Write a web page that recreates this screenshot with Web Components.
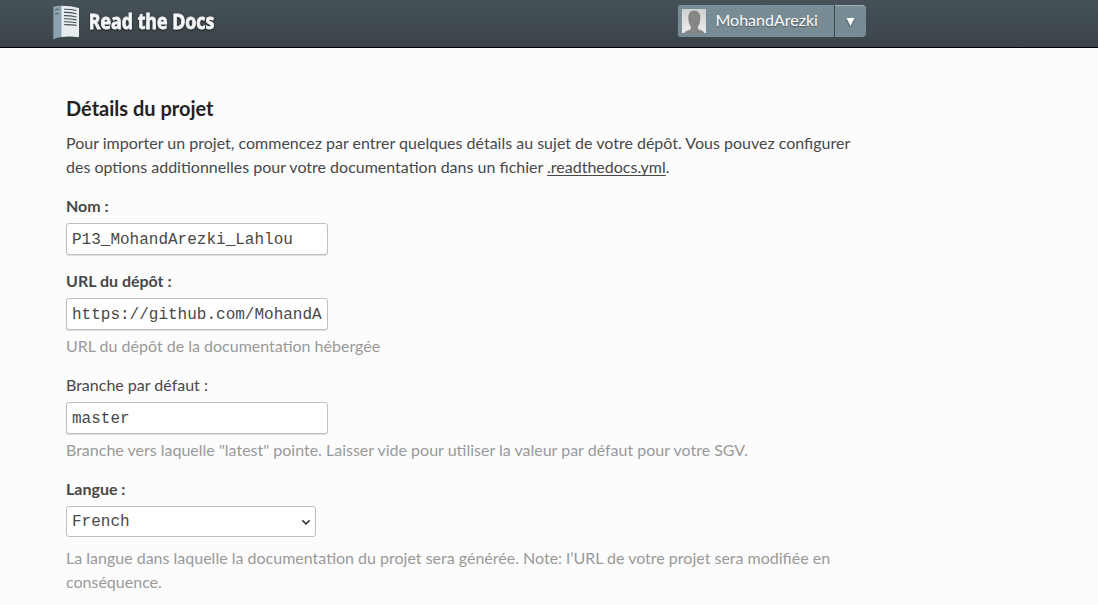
<!DOCTYPE html>
<html lang="fr">
<head>
<meta charset="utf-8">
<title>Read the Docs</title>
<style>
body{margin:0;background:#fcfcfc;font:16px/24px Lato,"Open Sans",sans-serif;color:#484848;height:605px;overflow:hidden}
</style>
</head>
<body>
<rtd-page></rtd-page>
<script>
class RtdLogo extends HTMLElement{
  constructor(){super();this.attachShadow({mode:'open'}).innerHTML=`
  <style>:host{display:flex;width:190px;height:47px}svg{display:block}text{font:700 20.5px "Open Sans","Noto Sans",sans-serif;fill:#f4f6f7;stroke:#f4f6f7;stroke-width:.8px;filter:drop-shadow(0 1px 1px #1c2428)}</style>
  <svg width="190" height="47" viewBox="0 0 190 47">
    <path d="M.3 6.8Q4 5.4 9 5.8V37Q4 37.2 .3 39.6Z" fill="#8ca1af"/>
    <path d="M8.5 5.8Q18 5.8 26 8V37.2Q17 35.8 8.5 37Z" fill="#e8ecee"/>
    <path d="M2 9.6Q4 9 6 9.3M2 14Q4 13.4 6 13.8" fill="none" stroke="#4c5f69" stroke-width="1"/>
    <path d="M11 9.3Q17 9 23.5 10.5M11 12.4Q17 12.3 23.5 13.7M11 15.6Q17 15.5 23.5 17M11 18.8Q17 18.7 23.5 19.9M11 21.8Q17 21.6 23.5 22.7M11 24.7Q17 24.5 23.5 25.4" fill="none" stroke="#46525a" stroke-width="1.1"/>
    <text x="35.8" y="28.5" textLength="125.5" lengthAdjust="spacingAndGlyphs">Read the Docs</text>
  </svg>`}
}
customElements.define('rtd-logo',RtdLogo);

class RtdUser extends HTMLElement{
  constructor(){super();this.attachShadow({mode:'open'}).innerHTML=`
  <style>
  :host{display:flex;height:32px;color:#fff;text-shadow:0 1px 1px #465158}
  .name{display:flex;box-sizing:border-box;width:156px;background:#788c96;padding:4px 0 4px 4px;gap:9.5px;border-radius:2px 0 0 2px;line-height:22px}
  .menu{display:flex;box-sizing:border-box;width:32px;background:#788c96;border-left:1px solid #3c464b;border-top:1px solid #a3b1b8;border-radius:0 4px 4px 0;align-items:center;justify-content:center}
  svg{display:block;flex:none}
  .menu svg{filter:drop-shadow(0 1px 1px #465158)}
  </style>
  <div class="name"><svg width="24" height="24" viewBox="0 0 24 24"><defs><linearGradient id="g" x2="0" y2="1"><stop stop-color="#d0d0d0"/><stop offset="1" stop-color="#ececec"/></linearGradient></defs><rect width="24" height="24" fill="url(#g)"/><path d="M2 24Q3 21.8 7 21Q9.3 20.3 9 18.5Q6.3 14.5 6.3 9Q6.3 1.5 12.3 1.5T18.3 9Q18.3 14.5 15.8 18.5Q15.5 20.3 18 21Q21.8 21.8 22.5 24Z" fill="#868686"/></svg><slot></slot></div>
  <div class="menu"><svg width="9" height="8"><path d="M.5 0H8.5L4.5 8Z" fill="#fff"/></svg></div>`}
}
customElements.define('rtd-user',RtdUser);

class RtdHeader extends HTMLElement{
  constructor(){super();this.attachShadow({mode:'open'}).innerHTML=`
  <style>:host{display:flex;box-sizing:border-box;height:48px;padding:0 232px 0 53px;justify-content:space-between;background:linear-gradient(#465158,#3a4449);border-bottom:1px solid #000}rtd-user{margin-top:5px}</style>
  <rtd-logo></rtd-logo><rtd-user>MohandArezki</rtd-user>`}
}
customElements.define('rtd-header',RtdHeader);

class RtdField extends HTMLElement{
  constructor(){super();
  const select=this.getAttribute('kind')==='select',v=this.getAttribute('value');
  this.attachShadow({mode:'open'}).innerHTML=`
  <style>
  :host{display:block;margin-top:14px}
  label{display:block;margin-bottom:5px;font-weight:700}
  :host([optional]) label{font-weight:400}
  .box{display:flex;align-items:center;justify-content:space-between;box-sizing:border-box;width:262px;height:32px;padding:3px 5px 0;background:#fff;border:1px solid #bfbfbf;border-radius:3px;box-shadow:0 1px 1px #ddd;font:16px/19px "Liberation Mono",monospace;overflow:hidden;white-space:nowrap}
  .select{width:250px;height:31px;box-shadow:none;padding:2px 4px 0 5px}
  .help{display:block;color:#999;margin-top:4px;padding-bottom:1px}
  .select~.help{margin-top:9px}
  </style>
  <label>${this.getAttribute('label')}</label>
  <div class="box ${select?'select':''}"><span>${v}</span>${select?'<svg width="10" height="8"><path d="M1.3 1.2L5 4.9L8.7 1.2" fill="none" stroke="#333" stroke-width="1.6"/></svg>':''}</div>
  ${this.hasChildNodes()?'<div class="help"><slot></slot></div>':''}`}
}
customElements.define('rtd-field',RtdField);

class RtdPage extends HTMLElement{
  constructor(){super();this.attachShadow({mode:'open'}).innerHTML=`
  <style>
  :host{display:block}
  main{width:800px;padding:48px 0 0 66px}
  h3{margin:0 0 11px;font-size:20px;line-height:24px;color:#222}
  p{margin:0;padding-bottom:1px}
  a{color:inherit;text-decoration:underline;text-decoration-thickness:1px;text-underline-offset:2px;text-decoration-skip-ink:none}
  </style>
  <rtd-header></rtd-header>
  <main>
  <h3>Détails du projet</h3>
  <p>Pour importer un projet, commencez par entrer quelques détails au sujet de votre dépôt. Vous pouvez configurer des options additionnelles pour votre documentation dans un fichier <a>.readthedocs.yml</a>.</p>
  <rtd-field label="Nom :" value="P13_MohandArezki_Lahlou"></rtd-field>
  <rtd-field label="URL du dépôt :" value="https://github.com/MohandA">URL du dépôt de la documentation hébergée</rtd-field>
  <rtd-field optional label="Branche par défaut :" value="master">Branche vers laquelle "latest" pointe. Laisser vide pour utiliser la valeur par défaut pour votre SGV.</rtd-field>
  <rtd-field kind="select" label="Langue :" value="French">La langue dans laquelle la documentation du projet sera générée. Note: l’URL de votre projet sera modifiée en conséquence.</rtd-field>
  </main>`}
}
customElements.define('rtd-page',RtdPage);
</script>
</body>
</html>
